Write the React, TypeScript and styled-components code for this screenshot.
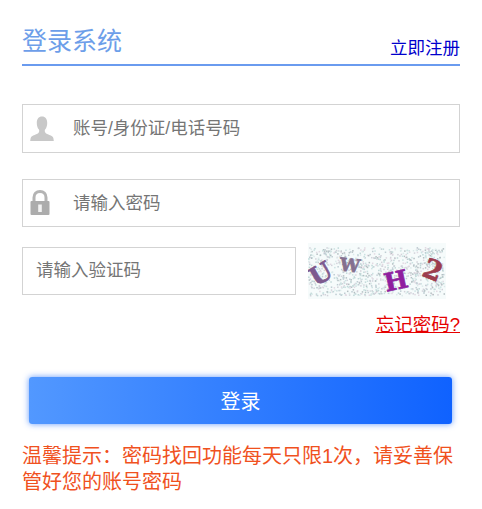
import React from 'react';
import styled, { createGlobalStyle } from 'styled-components';

const GlobalStyle = createGlobalStyle`
  html, body {
    margin: 0;
    padding: 0;
    background: #fff;
  }
  body {
    font-family: "Liberation Sans", "Noto Sans CJK SC", sans-serif;
  }
  * {
    box-sizing: border-box;
  }
`;

// seeded so the captcha noise is the same on every load
const makeNoise = () => {
  let seed = 17;
  const next = () => {
    seed = (seed * 16807) % 2147483647;
    return seed / 2147483647;
  };
  const colors = ['#c0d8d8', '#d2d2da', '#dceaea', '#bfcdd3', '#e2d9e2', '#cbe2e2', '#b4bfc2'];
  return Array.from({ length: 1000 }, () => ({
    x: next() * 136,
    y: 4 + next() * 48,
    c: colors[Math.floor(next() * colors.length)],
  }));
};
const noise = makeNoise();

const captchaChars = [
  { ch: 'U', x: 13, y: 31, size: 25, angle: -30, color: '#7d5a8e' },
  { ch: 'W', x: 42, y: 22, size: 18, angle: 6, color: '#84708f' },
  { ch: 'H', x: 88, y: 38, size: 25, angle: -12, color: '#8f1f9f' },
  { ch: '2', x: 125, y: 27, size: 27, angle: 22, color: '#9c3d4e' },
];

function App() {
  return (
    <Page>
      <GlobalStyle />
      <Header>
        <Title>登录系统</Title>
        <RegisterLink href="#">立即注册</RegisterLink>
      </Header>

      <Field>
        <IconSlot>
          <svg width="26" height="26" viewBox="0 0 26 26">
            <path
              fill="#c8c8c8"
              d="M13 0.5c-3.4 0-5.2 2.6-5.2 6.4 0 2.6 0.7 4.9 1.9 6.4 0.6 0.7 0.7 1.8 0.3 2.7-0.5 1.3-2.2 2.1-4.4 3-2 0.8-3.6 1.5-4 3.2l-0.4 2.8h23.6l-0.4-2.8c-0.4-1.7-2-2.4-4-3.2-2.2-0.9-3.9-1.7-4.4-3-0.4-0.9-0.3-2 0.3-2.7 1.2-1.5 1.9-3.8 1.9-6.4 0-3.8-1.8-6.4-5.2-6.4z"
            />
          </svg>
        </IconSlot>
        <FieldInput placeholder="账号/身份证/电话号码" />
      </Field>

      <PasswordField>
        <IconSlot>
          <svg width="26" height="28" viewBox="0 0 26 28">
            <path
              fill="none"
              stroke="#b4b4b4"
              strokeWidth="3"
              d="M5 13V8.5C5 4.8 7.4 2.5 11 2.5s6 2.3 6 6V13"
            />
            <rect x="1.5" y="12" width="19" height="14" rx="1" fill="#acacac" />
            <rect x="9.2" y="15.5" width="3.6" height="7.5" fill="#f2f2f2" />
          </svg>
        </IconSlot>
        <FieldInput placeholder="请输入密码" />
      </PasswordField>

      <CaptchaRow>
        <CaptchaInput placeholder="请输入验证码" />
        <CaptchaImage>
          <svg width="138" height="56" viewBox="0 0 138 56">
            {noise.map((d, i) => (
              <rect key={i} x={d.x} y={d.y} width="1.5" height="1.5" fill={d.c} />
            ))}
            {captchaChars.map((c) => (
              <CaptchaChar
                key={c.ch}
                x={c.x}
                y={c.y}
                fill={c.color}
                stroke={c.color}
                fontSize={c.size}
                textAnchor="middle"
                dominantBaseline="central"
                transform={`rotate(${c.angle} ${c.x} ${c.y})`}
              >
                {c.ch}
              </CaptchaChar>
            ))}
          </svg>
        </CaptchaImage>
      </CaptchaRow>

      <ForgotRow>
        <ForgotLink href="#">忘记密码?</ForgotLink>
      </ForgotRow>

      <LoginButton type="button">登录</LoginButton>

      <Tip>温馨提示：密码找回功能每天只限1次，请妥善保管好您的账号密码</Tip>
    </Page>
  );
}

const Page = styled.div`
  width: 482px;
  height: 509px;
  padding: 0 22px;
  overflow: hidden;
`;

const Header = styled.div`
  display: flex;
  justify-content: space-between;
  align-items: flex-end;
  height: 66px;
  padding-bottom: 4px;
  border-bottom: 2px solid #6a9bef;
`;

const Title = styled.div`
  font-size: 25px;
  line-height: 40px;
  margin-bottom: -1px;
  color: #6d9ee9;
`;

const RegisterLink = styled.a`
  font-size: 17.5px;
  line-height: 24px;
  color: #0000cc;
  text-decoration: none;
`;

const Field = styled.div`
  display: flex;
  align-items: center;
  height: 49px;
  margin-top: 38px;
  padding-left: 6px;
  border: 1px solid #d3d3d3;
`;

const PasswordField = styled(Field)`
  height: 48px;
  margin-top: 26px;
`;

const IconSlot = styled.div`
  display: flex;
  align-items: center;
  justify-content: center;
  width: 26px;
  height: 28px;
  margin-right: 18px;
  flex-shrink: 0;
`;

const FieldInput = styled.input`
  flex: 1;
  min-width: 0;
  height: 100%;
  padding: 0;
  border: none;
  outline: none;
  background: transparent;
  font-family: inherit;
  font-size: 17.5px;
  color: #333;

  &::placeholder {
    color: #757575;
    opacity: 1;
  }
`;

const CaptchaRow = styled.div`
  display: flex;
  align-items: center;
  gap: 12px;
  height: 56px;
  margin-top: 16px;
`;

const CaptchaInput = styled.input`
  width: 274px;
  height: 48px;
  padding: 0 13px 2px;
  border: 1px solid #d3d3d3;
  outline: none;
  font-family: inherit;
  font-size: 17.5px;

  &::placeholder {
    color: #757575;
    opacity: 1;
  }
`;

const CaptchaImage = styled.div`
  display: flex;
  width: 138px;
  height: 56px;
  background: #f6fbfb;
`;

const CaptchaChar = styled.text`
  font-family: "DejaVu Serif", "Liberation Serif", serif;
  font-weight: bold;
  stroke-width: 0.7px;
`;

const ForgotRow = styled.div`
  display: flex;
  justify-content: flex-end;
  margin-top: 13px;
`;

const ForgotLink = styled.a`
  font-size: 18.5px;
  line-height: 26px;
  color: #e60000;
  text-decoration: underline;
`;

const LoginButton = styled.button`
  display: block;
  width: 423px;
  height: 47px;
  margin: 39px 0 0 7px;
  border: none;
  border-radius: 3px;
  background: linear-gradient(to right, #5298ff, #0f62ff);
  box-shadow: 0 0 6px rgba(50, 120, 250, 0.75);
  font-family: inherit;
  font-size: 20px;
  color: #fff;
`;

const Tip = styled.div`
  margin-top: 19px;
  font-size: 20px;
  line-height: 26px;
  color: #f0511e;
`;

export default App;
